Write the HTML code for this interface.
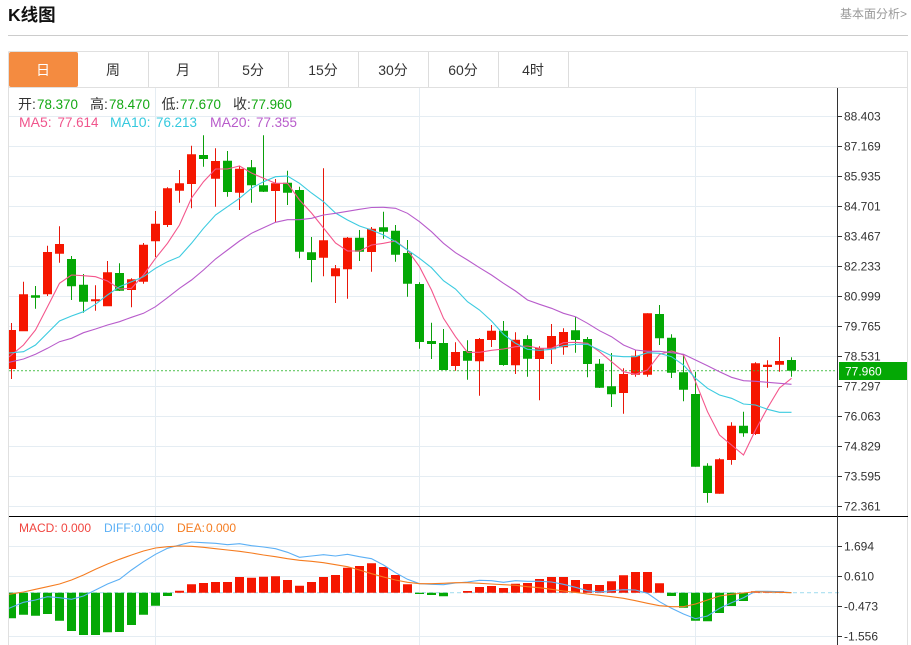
<!DOCTYPE html>
<html>
<head>
<meta charset="utf-8">
<title>K线图</title>
<style>
html,body{margin:0;padding:0;background:#fff;width:911px;height:645px;overflow:hidden}
svg{display:block;font-family:"Liberation Sans","Noto Sans CJK SC",sans-serif}
</style>
</head>
<body>
<svg width="911" height="645" viewBox="0 0 911 645" xmlns="http://www.w3.org/2000/svg">
<defs><clipPath id="c"><rect x="9" y="88" width="828" height="557"/></clipPath></defs>
<!-- header -->
<text x="8" y="21" font-size="17.5" font-weight="bold" fill="#111">K线图</text>
<text x="840" y="18" font-size="12" fill="#999">基本面分析&gt;</text>
<path d="M8 35.5H908" stroke="#ccc" fill="none"/>
<!-- tabs -->
<path d="M8.5 51.5H907.5V645M8.5 51.5V645M9 87.5H907.5" stroke="#e0e0e0" fill="none"/>
<path d="M148.5 52V87M218.5 52V87M288.5 52V87M358.5 52V87M428.5 52V87M498.5 52V87M568.5 52V87" stroke="#ddd" fill="none"/>
<rect x="9" y="52" width="69" height="35" rx="2" fill="#f48b40"/>
<g font-size="14" text-anchor="middle" fill="#333">
<text x="43" y="75" fill="#fff">日</text>
<text x="113" y="75">周</text>
<text x="183" y="75">月</text>
<text x="253" y="75">5分</text>
<text x="323" y="75">15分</text>
<text x="393" y="75">30分</text>
<text x="463" y="75">60分</text>
<text x="533" y="75">4时</text>
</g>
<!-- grid -->
<path d="M9 116.5H837M9 146.5H837M9 176.5H837M9 206.5H837M9 236.5H837M9 266.5H837M9 296.5H837M9 326.5H837M9 356.5H837M9 386.5H837M9 416.5H837M9 446.5H837M9 476.5H837M9 506.5H837M9 546.5H837M9 576.5H837M9 606.5H837M9 636.5H837M155.5 88V645M419.5 88V645M695.5 88V645" stroke="#e5edf3" fill="none"/>
<g clip-path="url(#c)">
<!-- candles red -->
<path fill="none" stroke="#e8170a" d="M11.5 323V379M23.5 281.7V295M47.5 245.7V296M59.5 226.3V262.7M95.5 285.3V310.7M107.5 261V306M131.5 278.3V307.3M143.5 243V283.7M155.5 211V257M167.5 187.3V227M179.5 170V202.7M191.5 145.7V208.3M215.5 148.3V206.7M239.5 165.7V210M275.5 179V222M323.5 168.3V276.3M335.5 265V303M347.5 237V298.7M371.5 227V271.7M455.5 342.3V370.7M479.5 338V395.7M491.5 325V347M515.5 332.3V374M539.5 346.3V400.3M551.5 324V364M563.5 328.3V354.7M623.5 368.3V413.7M635.5 350V376.7M647.5 313.3V376.7M719.5 458.3V493.7M731.5 422.3V464.7M755.5 362.3V435M767.5 360.3V387.7M779.5 337V371.7"/>
<path fill="#f51600" d="M7 330h9V369H7zM19 294.3h9V331.3h-9zM43 252h9V294.3h-9zM55 244h9V253.7h-9zM91 299.3h9V301.3h-9zM103 272.3h9V306.3h-9zM127 279.3h9V290h-9zM139 244.7h9V281.7h-9zM151 223.7h9V241.3h-9zM163 188.3h9V225h-9zM175 183.3h9V190.7h-9zM187 154.3h9V184h-9zM211 161h9V178.7h-9zM235 168.7h9V192.7h-9zM271 183.3h9V191h-9zM319 240.3h9V257.7h-9zM331 268.3h9V276.3h-9zM343 237.7h9V269.3h-9zM367 228.7h9V252h-9zM451 352h9V366h-9zM475 339h9V361.3h-9zM487 330.7h9V340h-9zM511 339.7h9V365.3h-9zM535 348h9V359h-9zM547 336h9V349.3h-9zM559 332h9V347.3h-9zM619 374h9V393h-9zM631 355.7h9V374.7h-9zM643 313.3h9V374.7h-9zM715 459.3h9V493.7h-9zM727 425.7h9V460h-9zM751 363.3h9V434h-9zM763 364.7h9V367h-9zM775 361h9V364.7h-9z"/>
<!-- candles green -->
<path fill="none" stroke="#0a9f0a" d="M35.5 286V308.7M71.5 256V300M83.5 274V312.7M119.5 263.3V291M203.5 135.3V166.7M227.5 151V196.7M251.5 160V202.7M263.5 135.3V192M287.5 170.7V205M299.5 186.7V258.3M311.5 237V282.3M359.5 230V261M383.5 211.7V238.7M395.5 225V261.7M407.5 240V296.7M419.5 282.3V348.7M431.5 322.7V359M443.5 329V370M467.5 340.3V379.7M503.5 321V365.7M527.5 335.3V376.7M575.5 317V352.7M587.5 337V377.3M599.5 359V388M611.5 353V407M659.5 305V345M671.5 334.3V378M683.5 354.3V401.3M695.5 371.7V466.7M707.5 463.3V502.7M743.5 411.7V436.7M791.5 357.3V376.7"/>
<path fill="#04a805" d="M31 295.3h9V297.7h-9zM67 259h9V286.3h-9zM79 284.7h9V301.7h-9zM115 273h9V290.7h-9zM199 155h9V159h-9zM223 160.7h9V192h-9zM247 167.3h9V185.3h-9zM259 185.3h9V191.7h-9zM283 182.7h9V192.7h-9zM295 190h9V251.7h-9zM307 252.3h9V260h-9zM355 237.7h9V251.7h-9zM379 227.3h9V231.7h-9zM391 230.7h9V254.7h-9zM403 253h9V283.7h-9zM415 284h9V342h-9zM427 341h9V344h-9zM439 343h9V370h-9zM463 351h9V360.7h-9zM499 330.7h9V365h-9zM523 339h9V358.7h-9zM571 330.3h9V340h-9zM583 339h9V364h-9zM595 363.7h9V387.7h-9zM607 386.3h9V394.3h-9zM655 314h9V338.3h-9zM667 337.7h9V372.7h-9zM679 372.3h9V389.7h-9zM691 394h9V466.7h-9zM703 465.7h9V493h-9zM739 425.7h9V433.3h-9zM787 360h9V370.7h-9z"/>
<!-- current price line -->
<path d="M9 370.7H837" stroke="#2fb52f" stroke-width="1.2" stroke-dasharray="2 2" fill="none" opacity=".75"/>
<!-- MA lines -->
<polyline fill="none" stroke="#f4568c" stroke-width="1.1" points="9,357 23.5,345 35.5,330 47.5,306.7 59.5,283.3 71.5,275 83.5,275.7 95.5,276.7 107.5,281 119.5,289 131.5,288.3 143.5,275 155.5,258.3 167.5,243.3 179.5,225 191.5,198 203.5,181.7 215.5,169 227.5,169 239.5,166 251.5,173 263.5,178.3 275.5,183.3 287.5,183.3 299.5,200 311.5,213 323.5,228 335.5,243 347.5,251 359.5,251 371.5,245 383.5,243.3 395.5,241 407.5,250 419.5,266.7 431.5,290 443.5,318.3 455.5,336.7 467.5,352.3 479.5,352.3 491.5,350.3 503.5,349 515.5,346.7 527.5,346 539.5,348.3 551.5,348.3 563.5,342.7 575.5,342.3 587.5,343.3 599.5,351.7 611.5,361.7 623.5,371.7 635.5,374.3 647.5,370 659.5,354.3 671.5,351 683.5,355 695.5,381.7 707.5,411.7 719.5,435 731.5,445 743.5,455 755.5,430 767.5,408 779.5,388 791.5,378.3"/>
<polyline fill="none" stroke="#3ccbe0" stroke-width="1.1" points="9,353 23.5,351.7 35.5,345 47.5,333 59.5,321 71.5,316 83.5,311.7 95.5,304.3 107.5,295 119.5,286.7 131.5,281.7 143.5,276.7 155.5,268.3 167.5,261.7 179.5,256.7 191.5,243.3 203.5,228.3 215.5,215 227.5,206.7 239.5,198.3 251.5,188.3 263.5,181.7 275.5,176.7 287.5,176 299.5,183.3 311.5,193 323.5,201.7 335.5,213 347.5,220 359.5,226 371.5,230 383.5,235 395.5,241.7 407.5,250 419.5,258.3 431.5,267.7 443.5,280.7 455.5,289 467.5,301.7 479.5,310 491.5,321 503.5,334.3 515.5,343.3 527.5,349.3 539.5,350.3 551.5,349.3 563.5,345.7 575.5,344.3 587.5,344.3 599.5,350 611.5,355.7 623.5,356.7 635.5,356.7 647.5,352.7 659.5,353.3 671.5,356.7 683.5,365 695.5,378.3 707.5,388.3 719.5,395 731.5,398.3 743.5,404 755.5,405 767.5,409.3 779.5,412.3 791.5,412.3"/>
<polyline fill="none" stroke="#b85ccb" stroke-width="1.1" points="9,362.3 23.5,359 35.5,354.3 47.5,348.3 59.5,341.7 71.5,338.3 83.5,332.7 95.5,329 107.5,325 119.5,321.7 131.5,317.3 143.5,313.3 155.5,306.7 167.5,297.7 179.5,288.3 191.5,280 203.5,270 215.5,259 227.5,250 239.5,241 251.5,233.3 263.5,227.7 275.5,222.3 287.5,219.7 299.5,219.7 311.5,218.3 323.5,215 335.5,213.3 347.5,211.3 359.5,209.3 371.5,207.5 383.5,207.3 395.5,208.3 407.5,213.3 419.5,221.7 431.5,231.7 443.5,243.3 455.5,252.7 467.5,260 479.5,267.7 491.5,275 503.5,283.3 515.5,291 527.5,300 539.5,304.3 551.5,308.3 563.5,313.3 575.5,316.7 587.5,323.3 599.5,330.7 611.5,336.7 623.5,345 635.5,350 647.5,351.3 659.5,351.3 671.5,352.7 683.5,354.3 695.5,360 707.5,365.7 719.5,371.7 731.5,377.3 743.5,380.7 755.5,381.3 767.5,382.3 779.5,383.3 791.5,384.3"/>
<!-- MACD -->
<path d="M9 592.7H837" stroke="#a9dff0" stroke-width="1.2" stroke-dasharray="4 3" fill="none"/>
<path fill="#f51600" d="M175 590.7h9V592.7h-9zM187 584.3h9V592.7h-9zM199 583h9V592.7h-9zM211 582h9V592.7h-9zM223 582h9V592.7h-9zM235 577h9V592.7h-9zM247 577.7h9V592.7h-9zM259 576.7h9V592.7h-9zM271 576.3h9V592.7h-9zM283 580h9V592.7h-9zM295 585.7h9V592.7h-9zM307 582h9V592.7h-9zM319 577h9V592.7h-9zM331 575h9V592.7h-9zM343 567.7h9V592.7h-9zM355 566h9V592.7h-9zM367 563.3h9V592.7h-9zM379 567h9V592.7h-9zM391 575h9V592.7h-9zM403 584.3h9V592.7h-9zM463 591h9V592.7h-9zM475 587h9V592.7h-9zM487 586h9V592.7h-9zM499 588h9V592.7h-9zM511 583.7h9V592.7h-9zM523 583h9V592.7h-9zM535 579h9V592.7h-9zM547 577h9V592.7h-9zM559 577h9V592.7h-9zM571 580h9V592.7h-9zM583 584h9V592.7h-9zM595 585h9V592.7h-9zM607 581.3h9V592.7h-9zM619 575.3h9V592.7h-9zM631 572h9V592.7h-9zM643 572h9V592.7h-9zM655 583.3h9V592.7h-9zM751 591.3h9V592.7h-9zM763 591.3h9V592.7h-9zM775 591.3h9V592.7h-9z"/>
<path fill="#04a805" d="M7 592.7h9V618.3H7zM19 592.7h9V614.7h-9zM31 592.7h9V615.7h-9zM43 592.7h9V614h-9zM55 592.7h9V620.7h-9zM67 592.7h9V631h-9zM79 592.7h9V635h-9zM91 592.7h9V635h-9zM103 592.7h9V632.3h-9zM115 592.7h9V632h-9zM127 592.7h9V625h-9zM139 592.7h9V614.7h-9zM151 592.7h9V605.7h-9zM163 592.7h9V596h-9zM415 592.7h9V594h-9zM427 592.7h9V595h-9zM439 592.7h9V596.3h-9zM667 592.7h9V596h-9zM679 592.7h9V607.7h-9zM691 592.7h9V620.7h-9zM703 592.7h9V621.3h-9zM715 592.7h9V613h-9zM727 592.7h9V606h-9zM739 592.7h9V601h-9z"/>
<polyline fill="none" stroke="#5cb0f5" stroke-width="1.1" points="9,608.3 23.5,602.3 35.5,600 47.5,596.7 59.5,597.7 71.5,599.3 83.5,596 95.5,590 107.5,584 119.5,579.3 131.5,570 143.5,561.7 155.5,554.3 167.5,548.3 179.5,545 191.5,542 203.5,542.7 215.5,543.3 227.5,544.7 239.5,543.7 251.5,545.7 263.5,547 275.5,548.7 287.5,552.3 299.5,557.3 311.5,556 323.5,554.7 335.5,556 347.5,554.3 359.5,556.7 371.5,558.7 383.5,565 395.5,572.7 407.5,579.3 419.5,583.7 431.5,584.3 443.5,584.7 455.5,583 467.5,582 479.5,580.3 491.5,580.7 503.5,582.3 515.5,580.7 527.5,581.3 539.5,581.3 551.5,582 563.5,584.3 575.5,587.3 587.5,590.7 599.5,592 611.5,590.7 623.5,589.7 635.5,590 647.5,593.3 659.5,601.7 671.5,608.3 683.5,614 695.5,618.7 707.5,616 719.5,608.3 731.5,602.7 743.5,597.7 755.5,591.3 767.5,591.3 779.5,591.7 791.5,592.7"/>
<polyline fill="none" stroke="#f57c20" stroke-width="1.1" points="9,594.3 23.5,592 35.5,589.3 47.5,586.7 59.5,584 71.5,580 83.5,575 95.5,569.3 107.5,564 119.5,559.3 131.5,555 143.5,551 155.5,548 167.5,546.7 179.5,546 191.5,546.3 203.5,547.3 215.5,548.7 227.5,550 239.5,551.3 251.5,553 263.5,555 275.5,556.7 287.5,558.7 299.5,560.3 311.5,561.3 323.5,562.7 335.5,564.7 347.5,566.7 359.5,570 371.5,573.7 383.5,577 395.5,580 407.5,582.3 419.5,583.7 431.5,583.7 443.5,583.3 455.5,582.7 467.5,582.7 479.5,583.3 491.5,584 503.5,584.7 515.5,585.3 527.5,586.7 539.5,587.7 551.5,589.3 563.5,591 575.5,592.3 587.5,594 599.5,595.3 611.5,596.7 623.5,598.3 635.5,600.7 647.5,603.3 659.5,605.7 671.5,606.7 683.5,606.7 695.5,604 707.5,600 719.5,596 731.5,594.3 743.5,593 755.5,591.7 767.5,592 779.5,592.3 791.5,592.7"/>
</g>
<path d="M837 592.7H839" stroke="#a9dff0" fill="none"/>
<!-- axes -->
<path d="M9 516.5H908" stroke="#000" fill="none"/>
<path d="M837.5 88V645" stroke="#333" fill="none"/>
<path d="M838 116.5H842M838 146.5H842M838 176.5H842M838 206.5H842M838 236.5H842M838 266.5H842M838 296.5H842M838 326.5H842M838 356.5H842M838 386.5H842M838 416.5H842M838 446.5H842M838 476.5H842M838 506.5H842M838 546.5H842M838 576.5H842M838 606.5H842M838 636.5H842" stroke="#333" fill="none"/>
<g font-size="12" fill="#333">
<text x="844" y="120.5">88.403</text>
<text x="844" y="150.5">87.169</text>
<text x="844" y="180.5">85.935</text>
<text x="844" y="210.5">84.701</text>
<text x="844" y="240.5">83.467</text>
<text x="844" y="270.5">82.233</text>
<text x="844" y="300.5">80.999</text>
<text x="844" y="330.5">79.765</text>
<text x="844" y="360.5">78.531</text>
<text x="844" y="390.5">77.297</text>
<text x="844" y="420.5">76.063</text>
<text x="844" y="450.5">74.829</text>
<text x="844" y="480.5">73.595</text>
<text x="844" y="510.5">72.361</text>
<text x="844" y="550.5">1.694</text>
<text x="844" y="580.5">0.610</text>
<text x="844" y="610.5">-0.473</text>
<text x="844" y="640.5">-1.556</text>
</g>
<rect x="839" y="362" width="68" height="18" fill="#04a805"/>
<text x="845" y="375.5" font-size="12" fill="#fff">77.960</text>
<!-- legend -->
<g font-size="14" fill="#333">
<text x="18" y="109">开:</text>
<text x="90" y="109">高:</text>
<text x="161.500" y="109">低:</text>
<text x="233" y="109">收:</text>
</g>
<g font-size="13.4" fill="#13a813">
<text x="37" y="109">78.370</text>
<text x="109" y="109">78.470</text>
<text x="180" y="109">77.670</text>
<text x="251" y="109">77.960</text>
</g>
<g font-size="14">
<text x="19" y="127" fill="#f0558c">MA5:</text>
<text x="57.500" y="127" font-size="13.4" fill="#f0558c">77.614</text>
<text x="110" y="127" fill="#35c9de">MA10:</text>
<text x="156" y="127" font-size="13.4" fill="#35c9de">76.213</text>
<text x="210" y="127" fill="#b85ccb">MA20:</text>
<text x="256" y="127" font-size="13.4" fill="#b85ccb">77.355</text>
</g>
<g font-size="12">
<text x="19" y="532" fill="#f0453f">MACD:</text>
<text x="61" y="532" fill="#f0453f">0.000</text>
<text x="104" y="532" fill="#5cb0f5">DIFF:</text>
<text x="134" y="532" fill="#5cb0f5">0.000</text>
<text x="177" y="532" fill="#f57c20">DEA:</text>
<text x="206" y="532" fill="#f57c20">0.000</text>
</g>
</svg>
</body>
</html>
